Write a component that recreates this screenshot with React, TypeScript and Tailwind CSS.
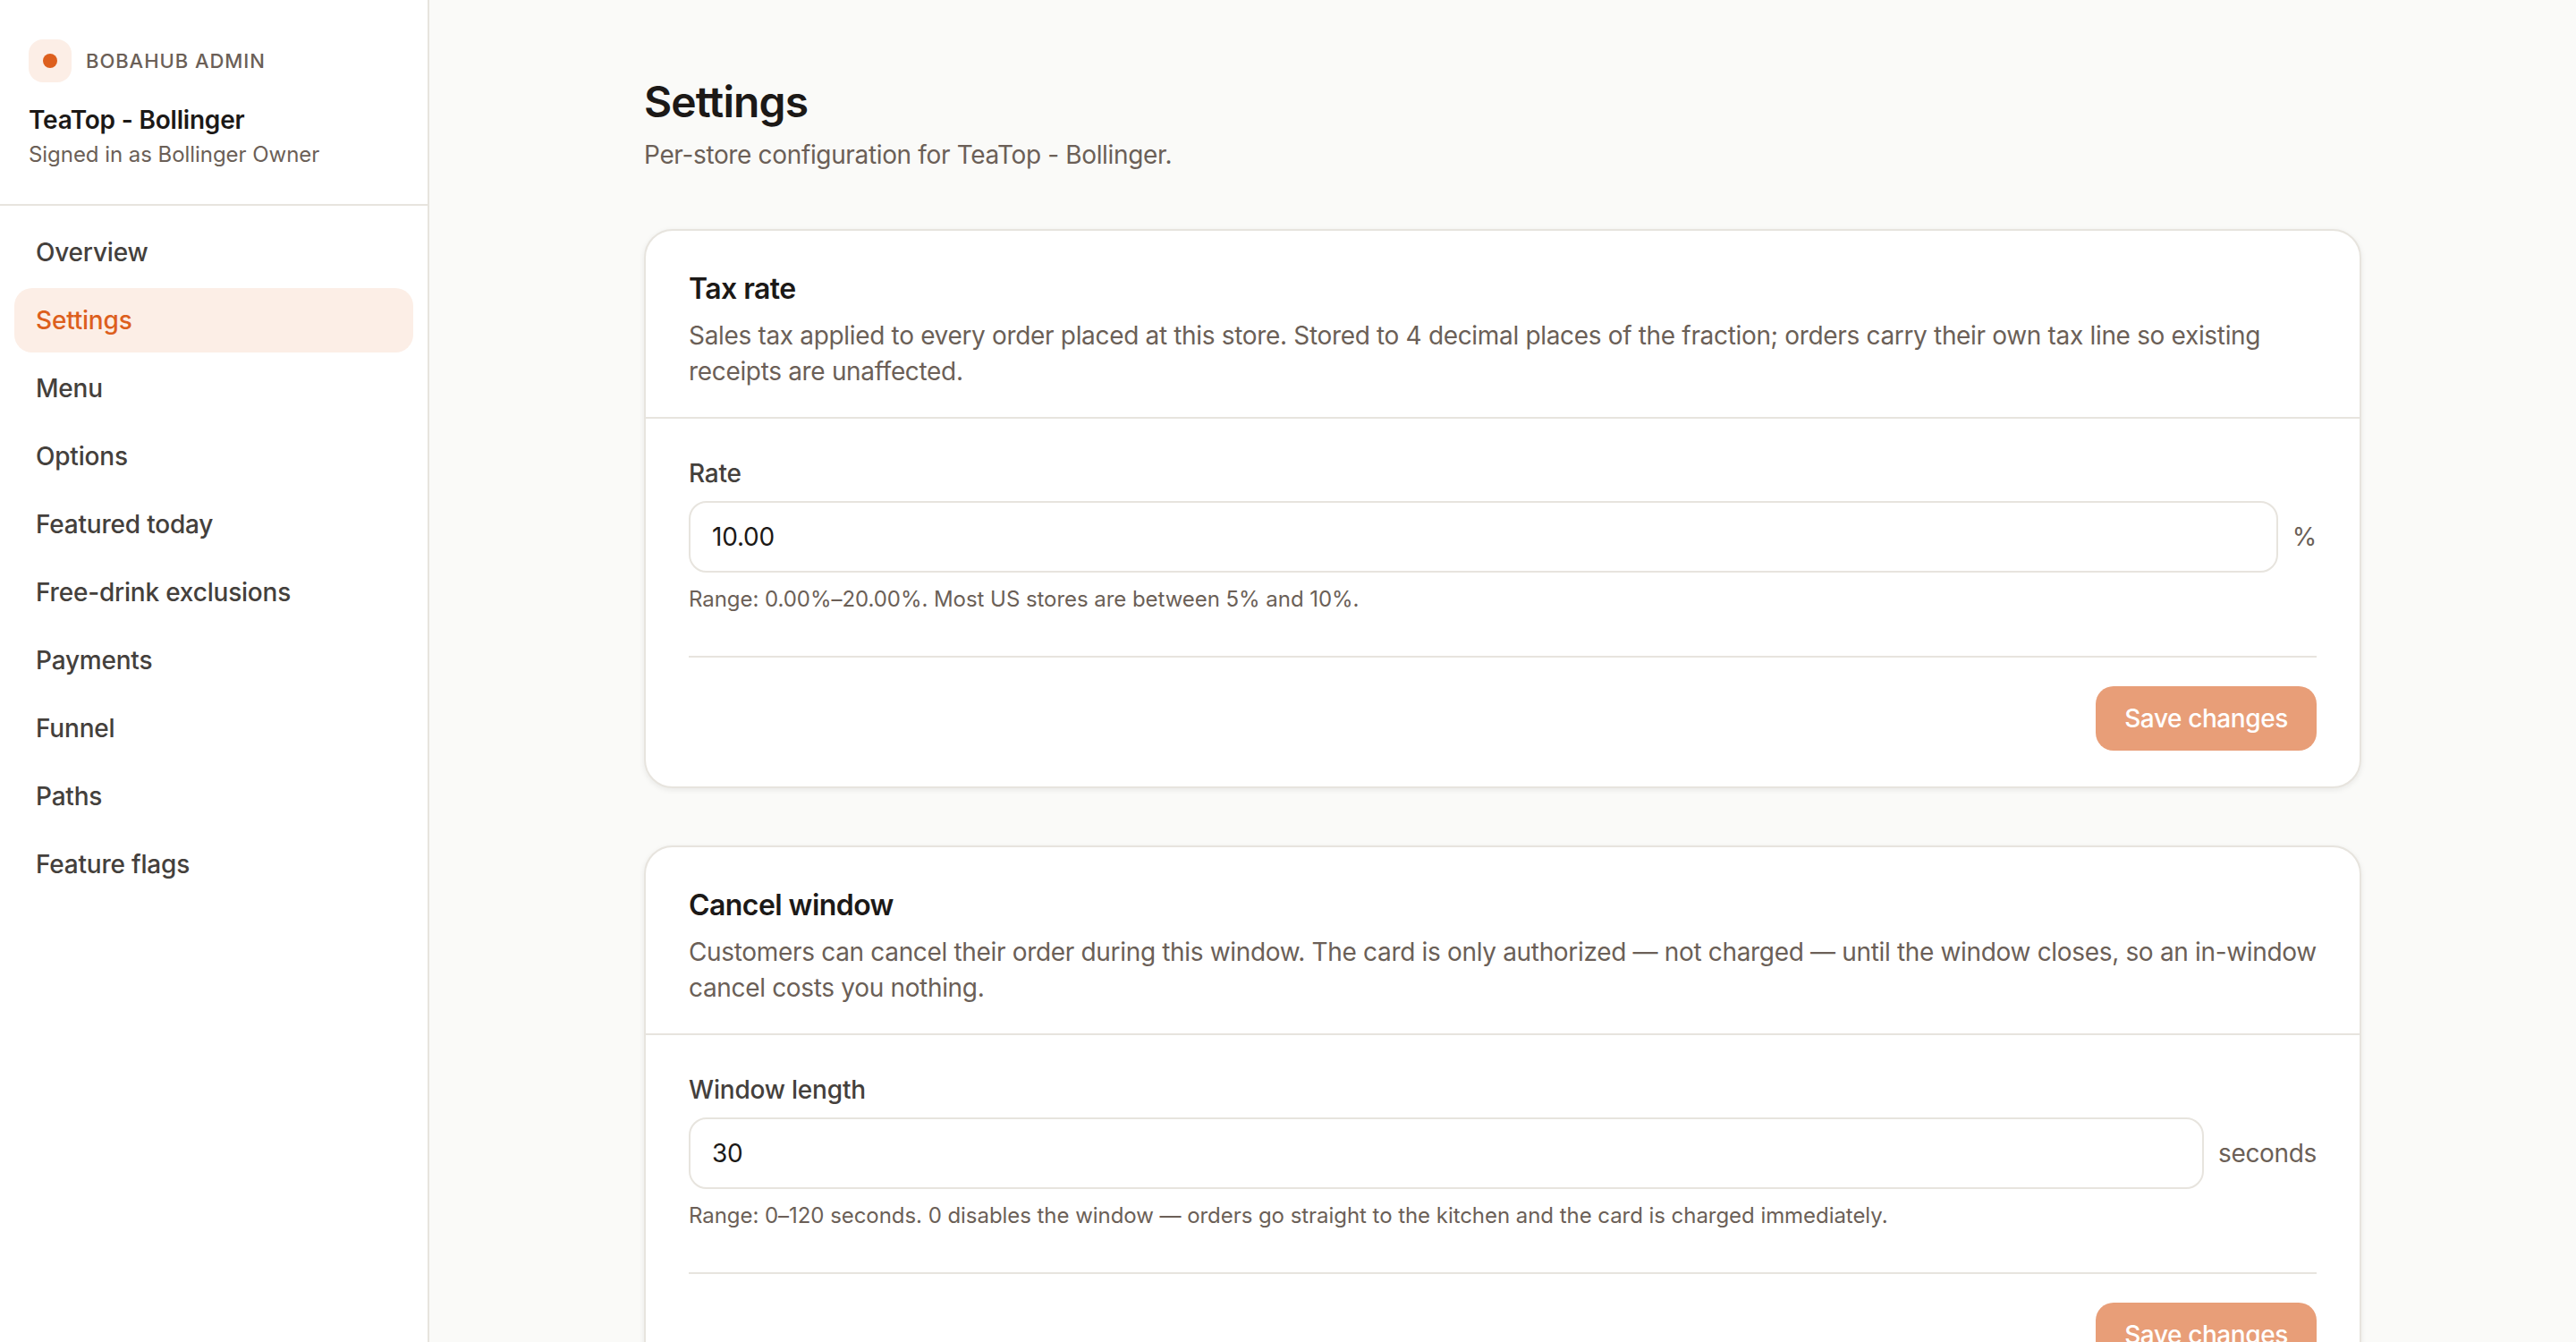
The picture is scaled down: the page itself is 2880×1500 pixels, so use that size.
const navItems = [
  "Overview",
  "Settings",
  "Menu",
  "Options",
  "Featured today",
  "Free-drink exclusions",
  "Payments",
  "Funnel",
  "Paths",
  "Feature flags",
];

function Sidebar() {
  return (
    <aside className="w-[480px] shrink-0 border-r-2 border-[#e7e4de] bg-white">
      <div className="border-b-2 border-[#e7e4de] px-8 pt-11 pb-[39px]">
        <div className="flex items-center gap-4">
          <div className="flex h-12 w-12 items-center justify-center rounded-2xl bg-[#fceee6]">
            <span className="h-4 w-4 rounded-full bg-[#dd5f1d]" />
          </div>
          <span className="text-[22px] font-medium tracking-[0.95px] text-[#6b5f57]">
            BOBAHUB ADMIN
          </span>
        </div>
        <p className="mt-[22px] text-[28px] leading-[40px] font-semibold tracking-[-0.2px] text-[#1c1917]">
          TeaTop - Bollinger
        </p>
        <p className="mt-[3px] text-[24px] leading-[32px] tracking-[-0.05px] text-[#6b5f57]">
          Signed in as Bollinger Owner
        </p>
      </div>
      <nav className="flex flex-col gap-1 px-4 py-4">
        {navItems.map((item) => (
          <a
            key={item}
            className={
              item === "Settings"
                ? "flex h-[72px] items-center rounded-[20px] bg-[#fceee6] px-6 text-[28px] font-[450] tracking-[-0.2px] text-[#dd5f1d]"
                : "flex h-[72px] items-center rounded-[20px] px-6 text-[28px] font-[450] tracking-[-0.2px] text-[#44403c]"
            }
          >
            {item}
          </a>
        ))}
      </nav>
    </aside>
  );
}

function SettingCard({
  title,
  description,
  label,
  value,
  unit,
  hint,
}: {
  title: string;
  description: string;
  label: string;
  value: string;
  unit: string;
  hint: string;
}) {
  return (
    <section className="shrink-0 rounded-[32px] border-2 border-[#e7e4de] bg-white shadow-[0_2px_6px_rgba(28,25,23,0.08)]">
      <div className="border-b-2 border-[#e7e4de] px-12 pt-[41px] pb-[31px]">
        <h2 className="text-[32px] leading-[48px] font-semibold tracking-[-0.56px] text-[#1c1917]">{title}</h2>
        <p className="mt-2 text-[28px] leading-[40px] tracking-[-0.33px] text-[#6b5f57]">{description}</p>
      </div>
      <div className="px-12 pt-[41px] pb-10">
        <label className="block text-[28px] leading-[40px] font-[450] tracking-[-0.2px] text-[#44403c]">{label}</label>
        <div className="mt-[11px] flex items-center gap-4">
          <input
            readOnly
            value={value}
            className="h-[80px] min-w-0 flex-1 rounded-[20px] border-2 border-[#e7e4de] bg-white px-6 text-[28px] tracking-[-0.2px] text-[#1c1917] outline-none"
          />
          <span className="text-[28px] tracking-[-0.33px] text-[#6b5f57]">{unit}</span>
        </div>
        <p className="mt-[14px] text-[24px] leading-[32px] tracking-[-0.05px] text-[#6b5f57]">{hint}</p>
        <div className="mt-[47px] flex justify-end border-t-2 border-[#e7e4de] pt-8">
          <button className="h-[72px] rounded-[20px] bg-[#e89e78] px-8 text-[28px] font-medium tracking-[-0.4px] text-white">
            Save changes
          </button>
        </div>
      </div>
    </section>
  );
}

export default function App() {
  return (
    <div className="flex h-screen overflow-hidden bg-[#fafaf8] font-['Inter',sans-serif] antialiased">
      <Sidebar />
      <main className="min-w-0 flex-1 overflow-hidden">
        <div className="mx-auto flex w-[1920px] flex-col pt-[82px]">
          <h1 className="text-[48px] leading-[64px] font-semibold tracking-[-0.9px] text-[#1c1917]">Settings</h1>
          <p className="mt-[7px] text-[28px] leading-[40px] tracking-[-0.35px] text-[#6b5f57]">
            Per-store configuration for TeaTop - Bollinger.
          </p>
          <div className="mt-[63px] flex flex-col gap-16">
            <SettingCard
              title="Tax rate"
              description="Sales tax applied to every order placed at this store. Stored to 4 decimal places of the fraction; orders carry their own tax line so existing receipts are unaffected."
              label="Rate"
              value="10.00"
              unit="%"
              hint="Range: 0.00%–20.00%. Most US stores are between 5% and 10%."
            />
            <SettingCard
              title="Cancel window"
              description="Customers can cancel their order during this window. The card is only authorized — not charged — until the window closes, so an in-window cancel costs you nothing."
              label="Window length"
              value="30"
              unit="seconds"
              hint="Range: 0–120 seconds. 0 disables the window — orders go straight to the kitchen and the card is charged immediately."
            />
          </div>
        </div>
      </main>
    </div>
  );
}
